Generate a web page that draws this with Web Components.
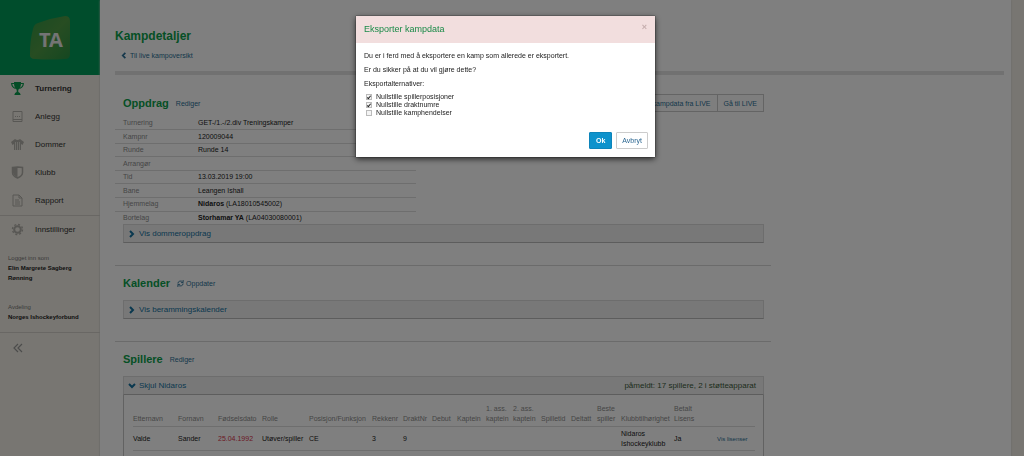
<!DOCTYPE html>
<html lang="no">
<head>
<meta charset="utf-8">
<title>Kampdetaljer</title>
<style>
html,body{margin:0;height:100%}
body{overflow:hidden;background:#f1ede4;color:#222;font:7px/13px "Liberation Sans",Arial,sans-serif}
</style>
</head>
<body>
<ta-app></ta-app>
<script>
const define = (name, html) => customElements.define(name, class extends HTMLElement {
  constructor() {
    super();
    const t = document.createElement('template');
    t.innerHTML = html;
    this.attachShadow({mode: 'open'}).append(t.content.cloneNode(true));
  }
});

define('ta-logo', `
<style>
:host{display:flex;justify-content:center;align-items:center;height:75px;background:#009a58}
svg{width:42px;height:44px}
text{font:bold 20px "Open Sans","Liberation Sans",sans-serif;fill:#e8e8e8}
</style>
<svg viewBox="0 0 42 44" role="img" aria-label="TA">
<defs><linearGradient id="g" x1="0" y1="0" x2="1" y2="1"><stop offset="0" stop-color="#349644"/><stop offset=".5" stop-color="#4f9a45"/><stop offset="1" stop-color="#2a8f42"/></linearGradient></defs>
<path d="M9 7Q22 2 36 0q5 0 5 5v33q0 5-5 5-15 1-30 0-6 0-5-6 0-13 3-24 1-5 5-6Z" fill="url(#g)"/>
<text x="10" y="31">T</text><text x="20" y="31">A</text>
</svg>`);

define('ta-nav-item', `
<style>
:host{display:block}
a{display:grid;grid-template-columns:35px 1fr;align-items:center;box-sizing:border-box;height:28px;padding-bottom:1px;font-size:8px;color:#333;text-decoration:none}
:host([active]) a{font-weight:bold}
span{display:flex;justify-content:center;color:#b0aea8}
:host([active]) span{color:#089a4c}
::slotted(svg){width:13px;height:13px}
</style>
<a href="#"><span><slot name="icon"></slot></span><slot></slot></a>`);

define('ta-sidebar', `
<style>
:host{display:block;background:#f1ede4;box-shadow:inset -1px 0 #e6e3dc}
.lower{border-top:1px solid #d2cfc8}
.info{padding:9px 8px 0;font-size:6px;line-height:10px;color:#777}
.info p{margin:0 0 19px}
.info p:last-child{margin-bottom:10px}
.info b{display:block;color:#222}
.fold{border:0;border-top:1px solid #d2cfc8;background:none;display:block;width:100%;height:30px;padding:0 0 0 13px;color:#999}
.fold svg{display:block;width:10px;height:10px}
</style>
<ta-logo></ta-logo>
<nav>
<ta-nav-item active><svg slot="icon" viewBox="0 0 13 13"><path d="M3 1.500H.700C.700 4 2 5.500 4.500 6.500M10 1.500h2.300C12.300 4 11 5.500 8.500 6.500" fill="none" stroke="currentColor" stroke-width="1.200"/><path d="M3 0h7q.2 5.500-2.700 7.800V10q2 .5 2.400 3H3.300q.4-2.500 2.400-3V7.800Q2.800 5.500 3 0Z" fill="currentColor"/></svg>Turnering</ta-nav-item>
<ta-nav-item><svg slot="icon" viewBox="0 0 13 13" fill="none" stroke="currentColor"><path d="M2 1.500h9v10H2Zm2 5h1m1 0h1m1 0h1M2 9.500h9"/></svg>Anlegg</ta-nav-item>
<ta-nav-item><svg slot="icon" viewBox="0 0 13 13"><path d="M4 1 0 4l1.500 3L3 6v6h7V6l1.500 1L13 4 9 1Q6.500 3 4 1Z" fill="currentColor"/><path d="M4.500 4v8m2-8v8m2-8v8" stroke="#f1ede4" stroke-width=".7"/></svg>Dommer</ta-nav-item>
<ta-nav-item><svg slot="icon" viewBox="0 0 13 13"><path d="M1.500 1.500 6.500 1l5 .5v5q0 3.500-5 5.500-5-2-5-5.500Z" fill="none" stroke="currentColor" stroke-width="1.500"/><path d="M2 2h4.500v9.500Q2 9 2 6.500Z" fill="currentColor"/></svg>Klubb</ta-nav-item>
<ta-nav-item><svg slot="icon" viewBox="0 0 13 13" fill="none" stroke="currentColor"><path d="M2 1h6l3 3v8H2Zm6 0v3h3M4 6h4M4 8h5M4 10h5"/></svg>Rapport</ta-nav-item>
<div class="lower"><ta-nav-item><svg slot="icon" viewBox="0 0 13 13" fill="none" stroke="currentColor"><circle cx="6.500" cy="6.500" r="3.300" stroke-width="2"/><circle cx="6.500" cy="6.500" r="5" stroke-width="1.400" stroke-dasharray="2 1.927"/></svg>Innstillinger</ta-nav-item></div>
</nav>
<div class="info"><p>Logget inn som<b>Elin Margrete Sagberg Rønning</b></p><p>Avdeling<b>Norges Ishockeyforbund</b></p></div>
<button class="fold" aria-label="Skjul meny"><svg viewBox="0 0 10 10" fill="none" stroke="currentColor" stroke-width="1.200"><path d="M5 1 1 5l4 4M9 1 5 5l4 4"/></svg></button>`);

define('ta-section', `
<style>
:host{display:block;max-width:656px;box-sizing:border-box;border-top:1px solid #d6d6d6;padding:8px 7px 22px 8px}
:host([first]){border-color:transparent;padding-top:18px}
header{display:flex;align-items:center;height:18px;gap:7px;margin-bottom:8px}
:host([first]) header{margin-bottom:5px}
h2{margin:0;font-size:11px;line-height:18px;color:#0ba04b}
.tools{margin-left:auto}
</style>
<header><h2><slot name="title"></slot></h2><slot name="link"></slot><div class="tools"><slot name="tools"></slot></div></header>
<slot></slot>`);

define('ta-link', `
<style>
:host{display:inline-block}
a{display:flex;align-items:center;gap:2px;color:#2a6f96;text-decoration:none}
::slotted(svg){width:7px;height:7px}
</style>
<a href="#"><slot></slot></a>`);

define('ta-buttons', `
<style>
:host{display:flex}
button{height:18px;padding:0 6px;border:1px solid #c8c8c8;background:#fdfdfd;font:inherit;color:#2a6f96;white-space:nowrap}
button+button{border-left:0}
</style>
<button>Hent kampdata fra LIVE</button><button>Gå til LIVE</button>`);

define('ta-panel', `
<style>
:host{display:block}
.bar{display:flex;justify-content:space-between;align-items:center;box-sizing:border-box;height:19px;padding:0 7px 0 4px;background:#f1f1f1;border:1px solid #dadada;border-bottom-color:#bbb;font-size:8px;color:#3a5a3a}
button{display:flex;align-items:center;gap:3px;padding:0;border:0;background:none;font:inherit;color:#14709e}
svg{width:8px;height:8px;fill:none;stroke:currentColor;stroke-width:2}
:host([open]) svg{transform:rotate(90deg)}
.body{display:none;border:1px solid #c4c4c4;border-top:0;padding:7px 8px 20px 9px}
:host([open]) .body{display:block}
</style>
<div class="bar"><button><svg viewBox="0 0 8 8"><path d="m2 1 3 3-3 3"/></svg><slot name="label"></slot></button><slot name="note"></slot></div>
<div class="body"><slot></slot></div>`);

define('ta-details', `
<style>
:host{display:block;margin-left:-8px;max-width:301px}
table{width:100%;height:107px;border-collapse:collapse;line-height:10px}
th,td{padding:0;text-align:left;border-bottom:1px solid #dcdcdc}
tr:last-child>*{border-bottom:0}
th{width:75px;padding-left:8px;font-weight:normal;color:#8c8c8c}
</style>
<table>
<tr><th scope="row">Turnering</th><td>GET-/1.-/2.div Treningskamper</td></tr>
<tr><th scope="row">Kampnr</th><td>120009044</td></tr>
<tr><th scope="row">Runde</th><td>Runde 14</td></tr>
<tr><th scope="row">Arrangør</th><td></td></tr>
<tr><th scope="row">Tid</th><td>13.03.2019 19:00</td></tr>
<tr><th scope="row">Bane</th><td>Leangen Ishall</td></tr>
<tr><th scope="row">Hjemmelag</th><td><b>Nidaros</b> (LA18010545002)</td></tr>
<tr><th scope="row">Bortelag</th><td><b>Storhamar YA</b> (LA04030080001)</td></tr>
</table>`);

define('ta-players', `
<style>
:host{display:block}
table{width:100%;table-layout:fixed;border-collapse:collapse;line-height:10px}
th,td{padding:0;text-align:left;font-weight:normal;border-bottom:1px solid #dcdcdc}
th{height:22px;padding-bottom:2px;vertical-align:bottom;color:#8c8c8c}
td{height:23px}
.date{color:#d8334a}
a{font-size:6px;color:#2a6f96;text-decoration:none}
</style>
<table>
<colgroup><col width="45"><col width="40"><col width="44"><col width="47"><col width="63"><col width="31"><col width="29"><col width="25"><col width="29"><col width="27"><col width="28"><col width="30"><col width="26"><col width="24"><col width="53"><col width="43"><col></colgroup>
<thead><tr><th>Etternavn<th>Fornavn<th>Fødselsdato<th>Rolle<th>Posisjon/Funksjon<th>Rekkenr<th>DraktNr<th>Debut<th>Kaptein<th>1. ass.<br>kaptein<th>2. ass.<br>kaptein<th>Spilletid<th>Deltatt<th>Beste<br>spiller<th>Klubbtilhørighet<th>Betalt<br>Lisens<th></tr></thead>
<tbody><tr><td>Valde<td>Sander<td class="date">25.04.1992<td>Utøver/spiller<td>CE<td>3<td>9<td><td><td><td><td><td><td><td>Nidaros<br>Ishockeyklubb<td>Ja<td><a href="#">Vis lisenser</a></tr></tbody>
</table>`);

define('ta-modal', `
<style>
:host{position:fixed;inset:0;display:flex;justify-content:center;align-items:flex-start;padding:16px 13px 0 0;background:rgba(0,0,0,.5)}
.box{width:299px;background:#fff;box-shadow:0 2px 6px rgba(0,0,0,.7),0 0 1px #000}
header{display:flex;justify-content:space-between;align-items:flex-start;box-sizing:border-box;height:27px;padding:7px 8px;background:#f2dede}
h3{margin:0;font-size:9px;font-weight:normal;color:#1a8a48}
.close{padding:0;border:0;background:none;font:bold 9px/8px "Liberation Sans",sans-serif;color:#c5adad}
.body{padding:6px 8px 0}
p{margin:0 0 1px}
fieldset{margin:3px 0 0;padding:0 0 0 2px;border:0}
label{display:flex;align-items:center;gap:4px;height:8px;line-height:8px}
input{appearance:none;display:flex;justify-content:center;box-sizing:border-box;width:6px;height:6px;margin:0;border:1px solid #bbb;background:#f4f4f4}
input:checked::before{content:"";width:1px;height:3px;border:solid #222;border-width:0 1px 1px 0;transform:rotate(40deg)}
footer{display:flex;justify-content:flex-end;gap:4px;padding:15px 7px 8px}
footer button{height:17px;padding:0 5px;border:1px solid #ccc;border-radius:1px;background:#fff;font:inherit;color:#2a6590}
footer .ok{padding:0 6px;background:#0d92cc;border-color:#0d84ba;color:#fff;font-weight:bold}
</style>
<section class="box" role="dialog" aria-modal="true" aria-labelledby="t">
<header><h3 id="t">Eksporter kampdata</h3><button class="close" aria-label="Lukk">×</button></header>
<div class="body">
<p>Du er i ferd med å eksportere en kamp som allerede er eksportert.</p>
<p>Er du sikker på at du vil gjøre dette?</p>
<p>Eksportalternativer:</p>
<fieldset><label><input type="checkbox" checked>Nullstille spillerposisjoner</label><label><input type="checkbox" checked>Nullstille draktnumre</label><label><input type="checkbox">Nullstille kamphendelser</label></fieldset>
</div>
<footer><button class="ok">Ok</button><button>Avbryt</button></footer>
</section>`);

define('ta-app', `
<style>
:host{display:grid;grid-template-columns:100px minmax(0,1fr) 13px;height:100vh;overflow:hidden}
main{min-width:0;padding:28px 7px 0 15px;background:#fff;box-shadow:0 0 2px #ccc}
h1{margin:0;font-size:12px;line-height:16px;color:#0ba04b}
.back{display:block;margin:5px 0 9px 6px}
hr{height:4px;margin:0;border:0;background:#e3e3e3}
</style>
<ta-sidebar></ta-sidebar>
<main>
<h1>Kampdetaljer</h1>
<ta-link class="back"><svg viewBox="0 0 8 8" fill="none" stroke="currentColor" stroke-width="2"><path d="M5 1 2 4l3 3"/></svg>Til live kampoversikt</ta-link>
<hr>
<ta-section first><span slot="title">Oppdrag</span><ta-link slot="link">Rediger</ta-link><ta-buttons slot="tools"></ta-buttons>
<ta-details></ta-details>
<ta-panel><span slot="label">Vis dommeroppdrag</span></ta-panel></ta-section>
<ta-section><span slot="title">Kalender</span><ta-link slot="link"><svg viewBox="0 0 8 8" fill="none" stroke="currentColor"><path d="M1 4a3 3 0 0 1 5.500-1.500M7 4a3 3 0 0 1-5.500 1.500M7 0v3H4.500M1 8V5h2.500"/></svg>Oppdater</ta-link>
<ta-panel><span slot="label">Vis berammingskalender</span></ta-panel></ta-section>
<ta-section><span slot="title">Spillere</span><ta-link slot="link">Rediger</ta-link>
<ta-panel open><span slot="label">Skjul Nidaros</span><span slot="note">påmeldt: 17 spillere, 2 i støtteapparat</span><ta-players></ta-players></ta-panel></ta-section>
</main>
<div></div>
<ta-modal></ta-modal>`);
</script>
</body>
</html>
